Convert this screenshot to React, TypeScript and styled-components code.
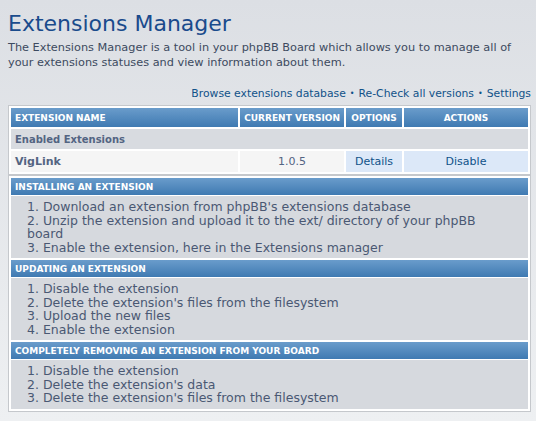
import { createGlobalStyle } from 'styled-components'
import styled from 'styled-components'

const GlobalStyle = createGlobalStyle`
  html, body {
    margin: 0;
    padding: 0;
  }
  body {
    background: linear-gradient(#dcdfe4, #eef0f2);
    min-height: 421px;
    font-family: "DejaVu Sans", Verdana, sans-serif;
    color: #536482;
  }
`

const installSteps = [
  "Download an extension from phpBB's extensions database",
  'Unzip the extension and upload it to the ext/ directory of your phpBB board',
  'Enable the extension, here in the Extensions manager',
]

const updateSteps = [
  'Disable the extension',
  "Delete the extension's files from the filesystem",
  'Upload the new files',
  'Enable the extension',
]

const removeSteps = [
  'Disable the extension',
  "Delete the extension's data",
  "Delete the extension's files from the filesystem",
]

const sections = [
  { title: 'Installing an extension', steps: installSteps },
  { title: 'Updating an extension', steps: updateSteps },
  { title: 'Completely removing an extension from your board', steps: removeSteps },
]

export default function App() {
  return (
    <>
      <GlobalStyle />
      <Page>
        <Title>Extensions Manager</Title>
        <Intro>
          The Extensions Manager is a tool in your phpBB Board which allows you to manage all of your extensions
          statuses and view information about them.
        </Intro>

        <Links>
          <Link>Browse extensions database</Link>
          <Bullet>•</Bullet>
          <Link>Re-Check all versions</Link>
          <Bullet>•</Bullet>
          <Link>Settings</Link>
        </Links>

        <Panel>
          <Table>
            <thead>
              <tr>
                <Th>Extension Name</Th>
                <Th $center $width={102}>
                  Current Version
                </Th>
                <Th $center $width={58}>
                  Options
                </Th>
                <Th $center $width={126}>
                  Actions
                </Th>
              </tr>
            </thead>
            <tbody>
              <tr>
                <GroupCell colSpan={4}>Enabled Extensions</GroupCell>
              </tr>
              <tr>
                <Td $bold>VigLink</Td>
                <Td $center>1.0.5</Td>
                <Td $center $action>
                  <ActionLink>Details</ActionLink>
                </Td>
                <Td $center $action>
                  <ActionLink>Disable</ActionLink>
                </Td>
              </tr>
            </tbody>
          </Table>
        </Panel>

        <Panel>
          {sections.map((section) => (
            <Section key={section.title}>
              <SectionHeader>{section.title}</SectionHeader>
              <Steps>
                {section.steps.map((step) => (
                  <li key={step}>{step}</li>
                ))}
              </Steps>
            </Section>
          ))}
        </Panel>
      </Page>
    </>
  )
}

const Page = styled.div`
  padding: 10px 5px 8px 8px;
`

const Title = styled.h1`
  margin: 0;
  font-family: "DejaVu Sans", "Trebuchet MS", sans-serif;
  font-weight: normal;
  font-size: 22px;
  line-height: 28px;
  color: #1a4b8c;
`

const Intro = styled.p`
  margin: 2px 0 0;
  font-size: 11.3px;
  line-height: 15px;
  color: #3c4a60;
`

const Links = styled.div`
  margin-top: 17px;
  display: flex;
  justify-content: flex-end;
  align-items: center;
  gap: 4px;
  font-size: 10.8px;
  line-height: 14px;
  color: #105289;
`

const Link = styled.span`
  color: #105289;
`

const Bullet = styled.span`
  font-size: 8px;
`

const Panel = styled.div`
  margin-top: 4px;
  border: 1px solid #c5c8cc;
  background: #fff;
  padding: 2px;

  & + & {
    margin-top: 0;
  }
`

const Table = styled.table`
  width: 100%;
  border-collapse: separate;
  border-spacing: 0;
`

const Th = styled.th<{ $center?: boolean; $width?: number }>`
  box-sizing: border-box;
  width: ${({ $width }) => ($width ? `${$width}px` : 'auto')};
  height: 21px;
  padding: 0 4px;
  white-space: nowrap;
  text-align: ${({ $center }) => ($center ? 'center' : 'left')};
  font-size: 9px;
  font-weight: bold;
  text-transform: uppercase;
  color: #fff;
  background: linear-gradient(#6a9ccb, #3f7ab2);
  background-clip: padding-box;
  border-left: 2px solid #fff;
  border-bottom: 2px solid #fff;

  &:first-child {
    border-left: none;
  }
`

const GroupCell = styled.td`
  height: 22px;
  padding: 0 4px;
  font-size: 10px;
  font-weight: bold;
  background: #d8dbe0;
  background-clip: padding-box;
  border-bottom: 2px solid #fff;
  box-sizing: border-box;
`

const Td = styled.td<{ $center?: boolean; $bold?: boolean; $action?: boolean }>`
  box-sizing: border-box;
  height: 21px;
  padding: 0 4px;
  font-size: 11px;
  font-weight: ${({ $bold }) => ($bold ? 'bold' : 'normal')};
  text-align: ${({ $center }) => ($center ? 'center' : 'left')};
  background: ${({ $action }) => ($action ? '#dce8f8' : '#f5f5f5')};
  background-clip: padding-box;
  border-left: 2px solid #fff;

  &:first-child {
    border-left: none;
  }
`

const ActionLink = styled.span`
  color: #105289;
`

const Section = styled.div`
  & + & {
    margin-top: 2px;
  }
`

const SectionHeader = styled.div`
  height: 17px;
  padding: 0 4px;
  display: flex;
  align-items: center;
  font-size: 9px;
  font-weight: bold;
  text-transform: uppercase;
  color: #fff;
  background: linear-gradient(#6a9ccb, #3f7ab2);
  border-bottom: 1px solid #fff;
`

const Steps = styled.ol`
  margin: 0;
  padding: 4px 30px 4px 16px;
  list-style: decimal inside;
  background: #d6d9de;
  font-size: 12.5px;
  line-height: 13.5px;
  color: #4a5873;
`
